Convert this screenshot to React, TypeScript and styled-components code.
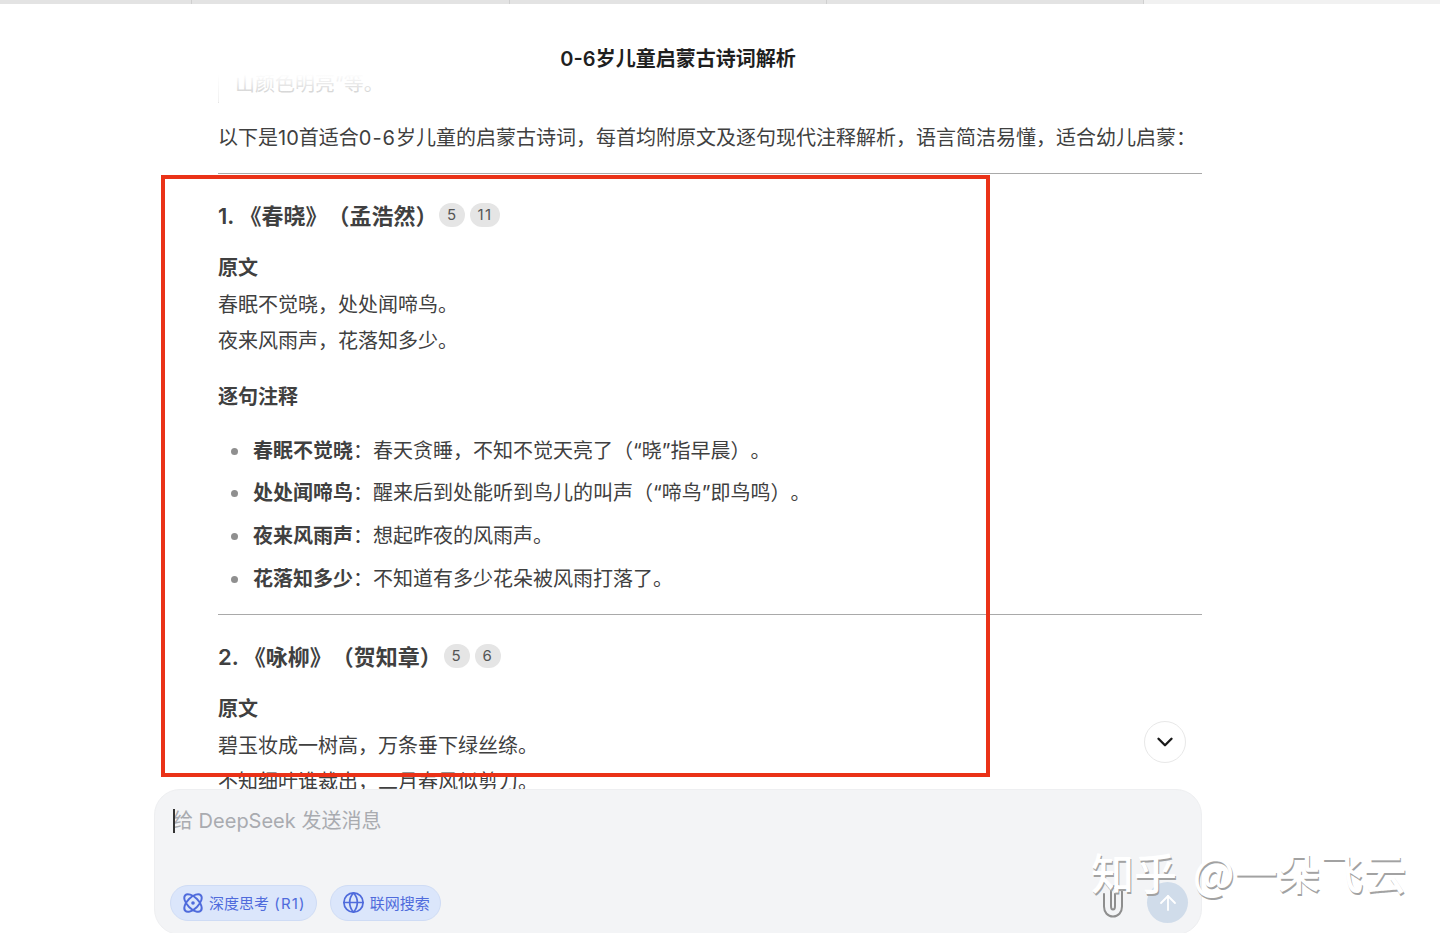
import React from "react";
import styled, { createGlobalStyle } from "styled-components";
import { ArrowUp, ChevronDown, Globe } from "lucide-react";

const Global = createGlobalStyle`
  html, body { margin: 0; padding: 0; background: #fff; height: 100%; overflow: hidden; }
  body {
    font-family: Inter, "Noto Sans CJK SC", sans-serif;
    color: #404040;
    text-spacing-trim: space-all;
  }
  #root { height: 933px; }
`;

const Page = styled.div`
  position: relative;
  width: 1440px;
  height: 933px;
  overflow: hidden;
  display: flex;
  flex-direction: column;
`;

const TabStrip = styled.div`
  display: flex;
  height: 4px;
  flex: none;
`;

const TabSegment = styled.div<{ $w: number; $light?: boolean }>`
  width: ${(p) => p.$w}px;
  background: ${(p) => (p.$light ? "#f1f1f1" : "#e3e3e3")};
  border-left: 1px solid #cfcfcf;
  box-sizing: border-box;
  &:first-child { border-left: none; }
`;

const Column = styled.main`
  position: relative;
  width: 1048px;
  margin-left: 154px;
  flex: 1;
  min-height: 0;
  display: flex;
  flex-direction: column;
`;

const Title = styled.header`
  flex: none;
  height: 68px;
  display: flex;
  align-items: center;
  justify-content: center;
  padding-top: 38px;
  box-sizing: border-box;
  font-size: 20px;
  font-weight: 600;
  color: #1f1f1f;
`;

const Scroller = styled.div`
  position: relative;
  flex: 1;
  min-height: 0;
  overflow: hidden;
  padding-left: 64px;
`;

const TopFade = styled.div`
  position: absolute;
  left: 0;
  right: 0;
  top: 0;
  height: 30px;
  background: linear-gradient(#fff 8%, rgba(255, 255, 255, 0.45) 100%);
  z-index: 1;
`;

const Quote = styled.blockquote`
  margin: -6px 0 17px;
  padding-left: 16px;
  border-left: 1px solid #e5e5e5;
  font-size: 20px;
  line-height: 36.5px;
  color: #8b8b8b;
`;

const Para = styled.p`
  margin: 0;
  font-size: 20px;
  line-height: 36.5px;
  color: #404040;
  white-space: nowrap;
`;

const Range = styled.span`
  letter-spacing: 1px;
`;

const Rule = styled.hr`
  border: none;
  height: 1px;
  background: #a9a9a9;
  margin: 16.5px 0 22px;
`;

const Heading = styled.h3`
  margin: 0 0 3px;
  display: flex;
  align-items: center;
  height: 36px;
  font-size: 22px;
  font-weight: 600;
  color: #404040;
  white-space: pre;
`;

const Badges = styled.span`
  display: inline-flex;
  gap: 5px;
  margin-left: 2px;
  margin-top: 2px;
`;

const Badge = styled.span`
  min-width: 26px;
  height: 24px;
  box-sizing: border-box;
  padding: 0 7px;
  border-radius: 12px;
  background: #e5e5e5;
  color: #555;
  font-size: 15px;
  font-weight: 400;
  letter-spacing: 1.5px;
  display: inline-flex;
  align-items: center;
  justify-content: center;
`;

const Label = styled.h4`
  margin: 18.75px 0 0;
  font-size: 20px;
  line-height: 36.5px;
  font-weight: 700;
  color: #404040;
`;

const Notes = styled.ul`
  margin: 17.7px 0 0;
  padding: 0 0 0 35px;
  list-style: none;
`;

const Note = styled.li`
  position: relative;
  font-size: 20px;
  line-height: 36.5px;
  color: #404040;
  white-space: nowrap;
  & + & { margin-top: 6.17px; }
  & strong { font-weight: 700; }
  &::before {
    content: "";
    position: absolute;
    left: -22px;
    top: 15px;
    width: 7px;
    height: 7px;
    border-radius: 50%;
    background: #8f8f8f;
  }
`;

const Jump = styled.button`
  position: absolute;
  left: 990px;
  top: 649px;
  width: 42px;
  height: 42px;
  border-radius: 50%;
  border: 1px solid #e8e8e8;
  background: #fff;
  color: #1a1a1a;
  padding: 0;
  display: flex;
  align-items: center;
  justify-content: center;
  z-index: 2;
`;

const Composer = styled.section`
  position: relative;
  flex: none;
  height: 146px;
  margin-bottom: -2px;
  box-sizing: border-box;
  padding: 17px 13px 11px 15px;
  border-radius: 26px;
  background: #f3f4f6;
  border: 1px solid #eeeff1;
  display: flex;
  flex-direction: column;
`;

const Prompt = styled.div`
  position: relative;
  margin-left: 3px;
  font-size: 20px;
  line-height: 28px;
  color: #a9abb0;
`;

const Caret = styled.span`
  position: absolute;
  left: 0;
  top: 2px;
  width: 2px;
  height: 24px;
  background: #333;
`;

const Toolbar = styled.div`
  margin-top: auto;
  display: flex;
  align-items: center;
  gap: 13px;
`;

const Pill = styled.button`
  height: 36px;
  box-sizing: border-box;
  padding: 0 10px 0 11px;
  border-radius: 18px;
  border: 1px solid #cfdcf5;
  background: #dbe6fb;
  color: #4f6bdc;
  font-family: inherit;
  font-size: 15px;
  display: inline-flex;
  align-items: center;
  gap: 5px;
  white-space: nowrap;
`;

const Model = styled.span`
  letter-spacing: 1.2px;
  margin-left: 1px;
`;

const ToolbarEnd = styled.div`
  margin-left: auto;
  display: flex;
  align-items: center;
  gap: 23px;
`;

const Attach = styled.span`
  display: flex;
  color: #8e8e8e;
  margin-bottom: 4px;
`;

const Send = styled.span`
  width: 41px;
  height: 41px;
  border-radius: 50%;
  background: #d0dcea;
  color: #fff;
  display: flex;
  align-items: center;
  justify-content: center;
`;

const Annotation = styled.div`
  position: absolute;
  left: 161px;
  top: 175px;
  width: 829px;
  height: 602px;
  box-sizing: border-box;
  border: 4px solid #ea3218;
  z-index: 3;
  pointer-events: none;
`;

const Watermark = styled.div`
  position: absolute;
  left: 1091px;
  top: 843px;
  font-family: "Noto Sans CJK SC", sans-serif;
  font-size: 43px;
  line-height: 56px;
  font-weight: 500;
  word-spacing: 6px;
  color: #fff;
  text-shadow: 1px 2px 0 #a2a2a2;
  white-space: nowrap;
  z-index: 4;
`;

const DeepThinkIcon = () => (
  <svg width="22" height="22" viewBox="0 0 22 22" fill="none" stroke="currentColor" strokeWidth="1.9">
    <ellipse cx="11" cy="11" rx="11" ry="5.6" transform="rotate(45 11 11)" />
    <ellipse cx="11" cy="11" rx="11" ry="5.6" transform="rotate(-45 11 11)" />
    <circle cx="11" cy="11" r="1.8" fill="currentColor" stroke="none" />
  </svg>
);

const ClipIcon = () => (
  <svg width="22" height="34" viewBox="0 0 22 34" fill="none" stroke="currentColor" strokeWidth="2" strokeLinecap="round">
    <path d="M2 10 V22.5 C2 28.5 5.8 32.5 11 32.5 C16.2 32.5 20 28.5 20 22.5 V8 C20 4 17.4 1.5 14.5 1.5 C11.6 1.5 9 4 9 8 V22 C9 24 9.8 25.5 11 25.5 C12.2 25.5 13 24 13 22 V10" />
  </svg>
);

const poem1 = [
  ["春眠不觉晓", "春天贪睡，不知不觉天亮了（“晓”指早晨）。"],
  ["处处闻啼鸟", "醒来后到处能听到鸟儿的叫声（“啼鸟”即鸟鸣）。"],
  ["夜来风雨声", "想起昨夜的风雨声。"],
  ["花落知多少", "不知道有多少花朵被风雨打落了。"],
];

export default function App() {
  return (
    <Page>
      <Global />
      <TabStrip>
        <TabSegment $w={191} />
        <TabSegment $w={318} />
        <TabSegment $w={317} />
        <TabSegment $w={317} />
        <TabSegment $w={297} $light />
      </TabStrip>
      <Column>
        <Title>0-6岁儿童启蒙古诗词解析</Title>
        <Scroller>
          <TopFade />
          <Quote>山颜色明亮”等。</Quote>
          <Para>
            以下是10首适合<Range>0-6</Range>岁儿童的启蒙古诗词，每首均附原文及逐句现代注释解析，语言简洁易懂，适合幼儿启蒙：
          </Para>
          <Rule />
          <Heading>
            1. 《春晓》（孟浩然）
            <Badges>
              <Badge>5</Badge>
              <Badge>11</Badge>
            </Badges>
          </Heading>
          <Label>原文</Label>
          <Para>春眠不觉晓，处处闻啼鸟。</Para>
          <Para>夜来风雨声，花落知多少。</Para>
          <Label>逐句注释</Label>
          <Notes>
            {poem1.map(([k, v]) => (
              <Note key={k}>
                <strong>{k}</strong>：{v}
              </Note>
            ))}
          </Notes>
          <Rule />
          <Heading>
            2. 《咏柳》（贺知章）
            <Badges>
              <Badge>5</Badge>
              <Badge>6</Badge>
            </Badges>
          </Heading>
          <Label>原文</Label>
          <Para>碧玉妆成一树高，万条垂下绿丝绦。</Para>
          <Para>不知细叶谁裁出，二月春风似剪刀。</Para>
          <Jump aria-label="滚动到底部">
            <ChevronDown size={26} strokeWidth={2.2} />
          </Jump>
        </Scroller>
        <Composer>
          <Prompt>
            <Caret />
            给 DeepSeek 发送消息
          </Prompt>
          <Toolbar>
            <Pill>
              <DeepThinkIcon />
              <span>
                深度思考 <Model>(R1)</Model>
              </span>
            </Pill>
            <Pill>
              <Globe size={23} strokeWidth={1.8} />
              联网搜索
            </Pill>
            <ToolbarEnd>
              <Attach>
                <ClipIcon />
              </Attach>
              <Send>
                <ArrowUp size={24} strokeWidth={1.8} />
              </Send>
            </ToolbarEnd>
          </Toolbar>
        </Composer>
      </Column>
      <Annotation />
      <Watermark>知乎 @一朵飞云</Watermark>
    </Page>
  );
}
